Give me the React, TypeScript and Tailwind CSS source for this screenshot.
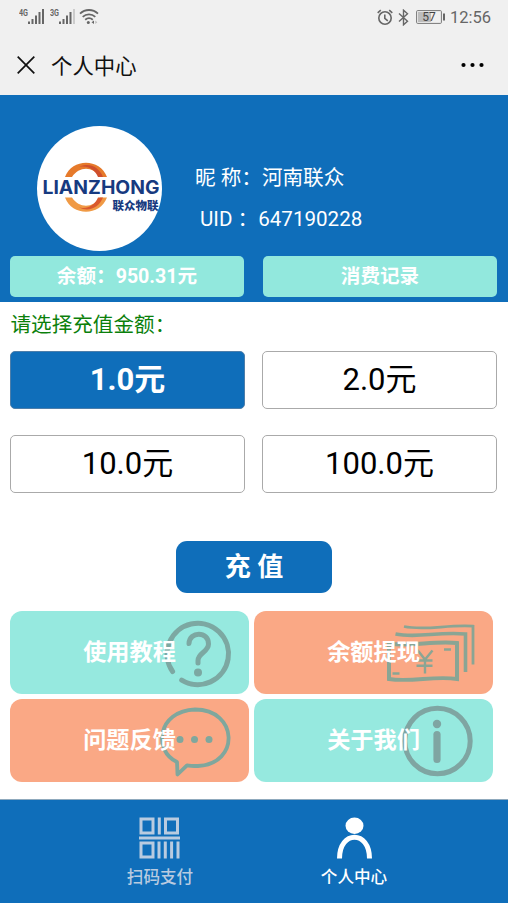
import type { ReactNode } from "react";
import { clsx } from "clsx";

const amounts = ["1.0元", "2.0元", "10.0元", "100.0元"];

function Signal({ label, weak }: { label: string; weak?: boolean }) {
  return (
    <svg width="27" height="18" viewBox="0 0 27 18" fill="#666">
      <text x="0" y="7.5" fontSize="9" fontWeight="700" textLength="9" lengthAdjust="spacingAndGlyphs">
        {label}
      </text>
      <rect x="9" y="13.5" width="2" height="2.5" />
      <rect x="12.5" y="11" width="2" height="5" />
      <rect x="16" y="7.5" width="2" height="8.5" />
      <rect x="19.5" y="4" width="2" height="12" />
      <rect x="23" y="1" width="2" height="15" fill={weak ? "#ccc" : "#666"} />
    </svg>
  );
}

function WifiIcon() {
  return (
    <svg width="20" height="18" viewBox="0 0 20 18" fill="none" stroke="#666" strokeWidth="1.8">
      <path d="M1 5.6C6 .8 14 .8 19 5.6" />
      <path d="M3.7 8.8C7.3 5.5 12.7 5.5 16.3 8.8" />
      <path d="M6.2 11.8C8.5 9.8 11.5 9.8 13.8 11.8" />
      <circle cx="9.3" cy="14.4" r="1.5" fill="#666" stroke="none" />
      <path d="M15 12.5v3.5l-2.5-1.8z" fill="#666" stroke="none" />
      <path d="M16.3 12.5v3.5l2-1.8z" fill="#bbb" stroke="none" />
    </svg>
  );
}

function StatusBar() {
  return (
    <div className="flex h-[34px] items-center justify-between pr-[17px] pl-[19px] text-[#666]">
      <div className="flex items-center">
        <Signal label="4G" />
        <div className="ml-1 flex">
          <Signal label="3G" weak />
        </div>
        <div className="ml-[2px]">
          <WifiIcon />
        </div>
      </div>
      <div className="flex items-center">
        <svg width="16" height="17" viewBox="0 0 16 17" fill="none" stroke="#666" strokeWidth="1.6">
          <circle cx="8" cy="9" r="6.2" />
          <path d="M7.8 5.5v3.8l3 2.6M.7 3.8 3.8 1.2M15.3 3.8l-3.1-2.6" />
        </svg>
        <svg className="ml-[5px]" width="11" height="17" viewBox="0 0 11 17" fill="none" stroke="#666" strokeWidth="1.4">
          <path d="m1 4.5 8.5 7.7-4 3.6V1.2l4 3.6L1 12.5" />
        </svg>
        <svg className="ml-[7px]" width="30" height="14" viewBox="0 0 30 14">
          <rect x=".6" y=".6" width="24.8" height="12.8" rx="1" fill="#f0f0f0" stroke="#777" />
          <rect x="2" y="2" width="13" height="10" fill="#bdbdbd" />
          <rect x="27" y="3.5" width="2" height="7" fill="#666" />
          <text x="13" y="11.2" fontSize="12" fill="#444" textAnchor="middle">57</text>
        </svg>
        <span className="ml-[4px] pt-[3px] text-[16.5px] leading-none">12:56</span>
      </div>
    </div>
  );
}

function Logo() {
  return (
    <svg className="size-[125px] shrink-0" viewBox="0 0 125 125">
      <circle cx="62.5" cy="62.5" r="62.5" fill="#fff" />
      <path d="M28 51C35 32 63 32 70 51H63C56 40 42 40 35 51Z" fill="#e67a2b" />
      <path d="M42 41C52 36 62 41 66 51H61C58 44 51 39 42 41Z" fill="#cf4f2c" />
      <path d="M28 71.5C35 90.500 63 90.500 70 71.500H63C56 82.500 42 82.500 35 71.500Z" fill="#f09a45" />
      <path d="M42 81.500C52 86.500 62 81.500 66 71.500H61C58 78.500 51 83.500 42 81.500Z" fill="#d9592d" />
      <text
        x="5.5"
        y="68"
        fontFamily="Inter, 'Liberation Sans'"
        fontSize="18.5"
        fontWeight="700"
        fill="#173a80"
        textLength="117"
        lengthAdjust="spacingAndGlyphs"
      >
        LIANZHONG
      </text>
      <text
        x="75.5"
        y="83.5"
        fontFamily="'Noto Sans CJK SC', sans-serif"
        fontSize="11.5"
        fontWeight="900"
        fill="#173a80"
        textLength="46"
      >
        联众物联
      </text>
    </svg>
  );
}

function Tile({ label, orange, children }: { label: string; orange?: boolean; children: ReactNode }) {
  return (
    <button
      className={clsx(
        "relative h-[83px] rounded-xl text-[23.2px] font-bold text-white",
        orange ? "bg-[#faa885]" : "bg-[#96e9df]"
      )}
    >
      <svg className="absolute top-0 right-0" width="130" height="83" viewBox="0 0 130 83" fill="none">
        {children}
      </svg>
      <span className="relative">{label}</span>
    </button>
  );
}

export default function App() {
  return (
    <div className="flex h-[903px] w-[508px] flex-col overflow-hidden bg-white font-[Roboto,'Noto_Sans_CJK_SC',sans-serif]">
      <header className="h-[95px] bg-[#f0f0f0]">
        <StatusBar />
        <div className="flex h-[61px] items-center pr-6 pl-[17px] text-black">
          <svg width="18" height="18" viewBox="0 0 18 18" stroke="#111" strokeWidth="1.7">
            <path d="M.7.7l16.6 16.6M17.3.7.7 17.3" />
          </svg>
          <h1 className="ml-4 pt-[5px] text-[21.4px] text-[#111]">个人中心</h1>
          <svg className="ml-auto" width="23" height="6" viewBox="0 0 23 6">
            <circle cx="2.5" cy="3" r="2.1" />
            <circle cx="11.5" cy="3" r="2.1" />
            <circle cx="20.5" cy="3" r="2.1" />
          </svg>
        </div>
      </header>

      <section className="h-[207px] bg-[#0f6eba] px-[10px] pt-[31px]">
        <div className="flex h-[130px] pl-[26.5px]">
          <Logo />
          <div className="pt-[32px] pl-[33.5px] text-[20.6px] leading-[41px] text-white">
            <p className="whitespace-pre">{"昵 称\uFF1A河南联众"}</p>
            <p className="pl-[5px] whitespace-pre">{"UID \uFF1A647190228"}</p>
          </div>
        </div>
        <div className="grid grid-cols-2 gap-[19px] pr-px text-[19.6px] font-bold text-white">
          <button className="h-[41px] rounded-[5px] bg-[#92e8dd]">{"余额\uFF1A950.31元"}</button>
          <button className="h-[41px] rounded-[5px] bg-[#92e8dd]">消费记录</button>
        </div>
      </section>

      <section className="px-[10px]">
        <p className="h-[49px] pt-[2px] pl-[0.5px] text-[20.6px] leading-[43px] text-[#0b800b]">
          {"请选择充值金额\uFF1A"}
        </p>
        <div className="grid grid-cols-2 gap-x-[17px] gap-y-[26px] pr-px">
          {amounts.map((amount, i) => (
            <button
              key={amount}
              className={clsx(
                "h-[58px] rounded-[5px] border pt-px text-[31px]",
                i === 0 ? "border-[#4d7eaa] bg-[#0f6eba] font-bold text-white" : "border-[#aaa] bg-white text-black"
              )}
            >
              {amount}
            </button>
          ))}
        </div>
      </section>

      <button className="mt-12 h-[52px] w-[156px] shrink-0 self-center rounded-[11px] bg-[#0f6eba] text-[26px] font-bold text-white">
        充 值
      </button>

      <section className="mt-[18px] grid grid-cols-2 gap-[5px] pr-[15px] pl-[10px]">
        <Tile label="使用教程">
          <g stroke="#7ca8a2" strokeWidth="5" strokeLinecap="round">
            <path d="M53.6 60.5A30.7 30.7 0 1 1 62.7 69.1" />
            <path d="M70 32.5C70.5 20 89.5 20 89.5 33c0 8-10.5 9-10.5 16.5v2.500" />
          </g>
          <circle cx="79" cy="61.500" r="4" fill="#7ca8a2" />
        </Tile>
        <Tile label="余额提现" orange>
          {/* stack of banknotes */}
          <g stroke="#8aa594">
            <path d="M41 15.500C62 20 84 13.500 110 15.200V53.500" strokeWidth="2.800" />
            <path d="M32.500 23C54 27.500 74 20.500 102.500 23V61" strokeWidth="3.600" />
            <path d="M26 32.500C48 36 70 29.500 94 32V68C72 64.500 48 71.500 26 68Z" strokeWidth="4" />
            <path d="M54.500 39 62 48.500 69.500 39.500M62 48v14.500M53.500 49.500h16M53.500 54.800h16" strokeWidth="2.400" />
            <path d="M81 38.500h7M29.500 62.500h7" strokeWidth="2.400" />
          </g>
        </Tile>
        <Tile label="问题反馈" orange>
          <path
            d="M58 63C34 52 38 12 76 10.500C119.500 10.500 121 65 79 67C75 67 71 67 68 66.300L58.500 75.500Z"
            stroke="#7fa79d"
            strokeWidth="3.800"
            strokeLinejoin="round"
          />
          <g fill="#7fa79d">
            <circle cx="61" cy="40.500" r="3.500" />
            <circle cx="75.500" cy="40.500" r="3.500" />
            <circle cx="90" cy="40.500" r="3.500" />
          </g>
        </Tile>
        <Tile label="关于我们">
          <circle cx="74.500" cy="42" r="32.700" stroke="#7fa5a2" strokeWidth="5" />
          <circle cx="74" cy="25" r="4.200" fill="#7fa5a2" />
          <path d="M74 35.500v25" stroke="#7fa5a2" strokeWidth="7.200" strokeLinecap="round" />
        </Tile>
      </section>

      <nav className="mt-auto flex h-[104px] justify-center border-t border-[#8fa9bd] bg-[#0f6eba] pl-[6px] text-[16.6px] font-medium">
        <a className="flex w-[194px] flex-col items-center pt-[17px] text-[#b9cbe0]">
          <svg className="mr-px" width="41" height="42" viewBox="0 0 41 42" fill="none" stroke="#b9cbe0" strokeWidth="3">
            <path d="M2 2h12v14H2zM26.500 2h12v14h-12zM2 26h12v14H2zM20.300.5v17M0 21h41M20 24.500v17M26.300 24.500v17M32.600 24.500v17M39 24.500v17" />
          </svg>
          <span className="mt-[7px]">扫码支付</span>
        </a>
        <a className="flex w-[194px] flex-col items-center pt-[17px] text-white">
          <svg width="41" height="42" viewBox="0 0 41 42" fill="none" stroke="#fff" strokeWidth="5">
            <ellipse cx="20.500" cy="8.800" rx="9" ry="8.200" fill="#fff" stroke="none" />
            <path d="M5.500 41.500c0-28.500 30-28.500 30 0" />
          </svg>
          <span className="mt-[7px]">个人中心</span>
        </a>
      </nav>
    </div>
  );
}
